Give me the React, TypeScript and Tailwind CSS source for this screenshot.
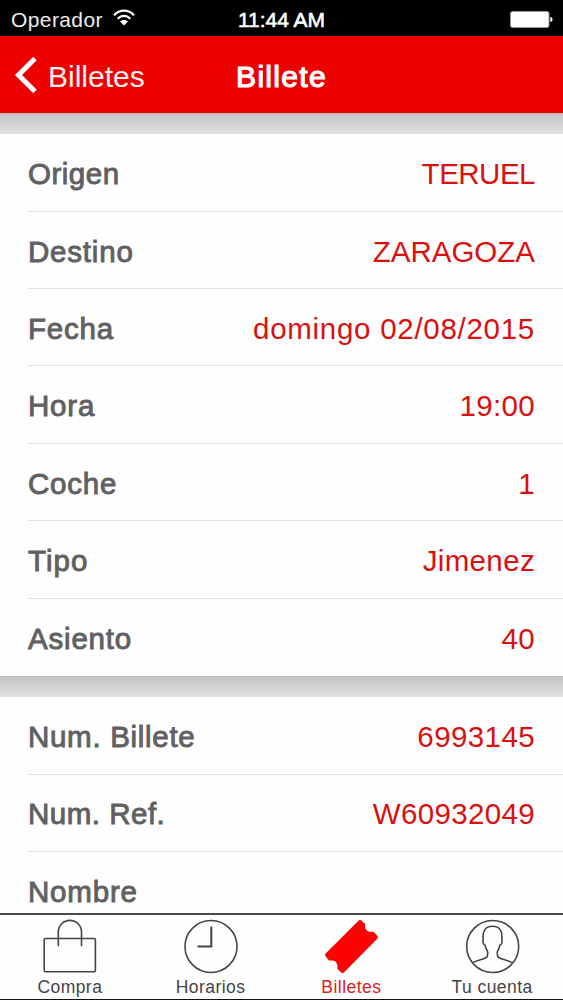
import type { ReactNode } from "react";

type Field = { label: string; value: string; labelFit?: string; valueFit?: string };

const trip: Field[] = [
  { label: "Origen", value: "TERUEL", labelFit: "tracking-[0.5px]", valueFit: "tracking-[-0.5px]" },
  { label: "Destino", value: "ZARAGOZA", valueFit: "tracking-[0px]" },
  { label: "Fecha", value: "domingo 02/08/2015", valueFit: "tracking-[0.72px]" },
  { label: "Hora", value: "19:00" },
  { label: "Coche", value: "1" },
  { label: "Tipo", value: "Jimenez", labelFit: "tracking-[1px]" },
  { label: "Asiento", value: "40" },
];

const ticket: Field[] = [
  { label: "Num. Billete", value: "6993145", labelFit: "tracking-[0.7px]", valueFit: "tracking-[0.4px]" },
  { label: "Num. Ref.", value: "W60932049", labelFit: "tracking-[0.5px]" },
  { label: "Nombre", value: "" },
];

function FieldList({ fields }: { fields: Field[] }) {
  return (
    <dl className="bg-[#fefefe] pl-7">
      {fields.map((f, i) => (
        <div
          key={f.label}
          className={`flex h-[77.4px] items-center justify-between pr-7 pt-[3px] text-[29.5px] leading-none ${
            i < fields.length - 1 ? "border-b-[1.5px] border-[#e0e0e1]" : ""
          }`}
        >
          <dt className={`whitespace-nowrap text-[#606062] [-webkit-text-stroke:0.9px_#606062] ${f.labelFit ?? "tracking-[0.8px]"}`}>
            {f.label}
          </dt>
          <dd className={`whitespace-nowrap text-[#d9100f] ${f.valueFit ?? "tracking-[0.35px]"}`}>{f.value}</dd>
        </div>
      ))}
    </dl>
  );
}

function Divider() {
  return <div className="h-[21.2px] shrink-0 border-t border-[#b9b7b8] bg-linear-to-b from-[#c5c3c5] to-[#e3e1e3]" />;
}

function Tab({ label, active, children }: { label: string; active?: boolean; children: ReactNode }) {
  return (
    <button
      className={`flex flex-1 flex-col items-center pt-1 text-[17.5px] leading-none tracking-[0.45px] ${
        active ? "text-[#e0201d]" : "text-[#444446]"
      }`}
    >
      <svg className="size-14" viewBox="0 0 56 56" fill="none" stroke="#444446" strokeWidth="1.6">
        {children}
      </svg>
      <span className="mt-[4px] -ml-px whitespace-nowrap">{label}</span>
    </button>
  );
}

export default function App() {
  return (
    <div className="flex h-[1000px] w-[563px] flex-col overflow-hidden bg-[#fefefe] font-['Liberation_Sans',Arial,sans-serif]">
      <header className="shrink-0 text-white">
        <div className="grid h-9 grid-cols-3 items-center bg-black pr-[10px] pl-[11px] pt-[2px] text-[21px] leading-none">
          <div className="flex items-center gap-[10px]">
            <span className="tracking-[0.4px] text-[#eeeeee]">Operador</span>
            <svg className="mb-[3px] h-[17px] w-[22px]" viewBox="0 0 22 17" fill="none" stroke="#fff" strokeWidth="2.3">
              <path d="M1 6.2C6.8.1 15.2.1 21 6.2" />
              <path d="M4.7 9.7c3.7-3.7 8.9-3.7 12.6 0" />
              <path d="M11 16.5 7 12.6c2.4-2 5.6-2 8 0z" fill="#fff" stroke="none" />
            </svg>
          </div>
          <span className="-ml-px text-center whitespace-nowrap [-webkit-text-stroke:0.6px_#fff]">11:44 AM</span>
          <svg className="h-[17px] w-[43px] justify-self-end" viewBox="0 0 43 17">
            <rect x=".5" y=".5" width="38.5" height="16" rx="2" fill="#fff" stroke="#999" />
            <path d="M40.3 6c3 .6 3 4.4 0 5z" fill="#fff" />
          </svg>
        </div>
        <div className="grid h-[77px] grid-cols-3 items-center bg-[#ec0000] px-[14px] pt-[5px] text-[30px] leading-none">
          <button className="flex items-center gap-[11px]">
            <svg className="mb-[4px] h-[38px] w-[23px]" viewBox="0 0 23 38" fill="none" stroke="#fff" strokeWidth="5">
              <path d="M21 2.5 4.5 19 21 35.5" />
            </svg>
            <span className="text-[#fff2f0]">Billetes</span>
          </button>
          <h1 className="text-center tracking-[1.3px] [-webkit-text-stroke:1.2px_#fff]">Billete</h1>
        </div>
      </header>
      <Divider />
      <main className="min-h-0 flex-1 overflow-hidden">
        <FieldList fields={trip} />
        <Divider />
        <FieldList fields={ticket} />
      </main>
      <nav className="flex h-[87px] shrink-0 border-t-2 border-b border-t-[#4b4b4d] border-b-[#111] bg-[#fefefe]">
        <Tab label="Compra">
          <rect x="2.2" y="19.5" width="51.2" height="33.2" rx="1.2" />
          <path d="M16.3 27.2V13a11.6 11.6 0 0 1 23.2 0v14.2" />
        </Tab>
        <Tab label="Horarios">
          <circle cx="28" cy="27.5" r="26" />
          <path d="M28.3 7.5v20H14.5" strokeWidth="2" />
        </Tab>
        <Tab label="Billetes" active>
          <path
            d="M1.9 34.2 34.2 1.9c1.2-1.2 2.6-1.2 3.7 0l3.3 3.1c-.5 2.6.1 5.1 1.6 6.5 1.5 1.4 4 1.7 6.4 1.1l3.8 3.9c1.1 1.1 1.1 2.4 0 3.6L20.4 52.9c-1.3 1.3-2.6 1.3-3.8.1L13.3 49.700c.5-2.600 0-5.100-1.500-6.600-1.500-1.400-3.900-1.800-6.500-1.300L1.900 37.800c-1.100-1.200-1.100-2.500 0-3.600z"
            fill="#fb0300"
            stroke="none"
          />
        </Tab>
        <Tab label="Tu cuenta">
          <circle cx="27.7" cy="27.5" r="26" />
          <path d="M8.2 43.4c4.5-2.3 9.6-3 12.6-4.7 1.9-1 2.1-4.3 1.7-6.5-1.2-1.4-1.9-3.6-2.4-6-1.900-.5-2.700-4-1.900-5.100C17.300 12.400 20 7.300 27.500 7.300s10.200 5.100 9.300 13.800c.8 1.100 0 4.600-1.900 5.100-.5 2.400-1.200 4.600-2.400 6-.4 2.200-.2 5.500 1.700 6.500 3 1.700 8.100 2.400 12.600 4.700" />
        </Tab>
      </nav>
    </div>
  );
}
